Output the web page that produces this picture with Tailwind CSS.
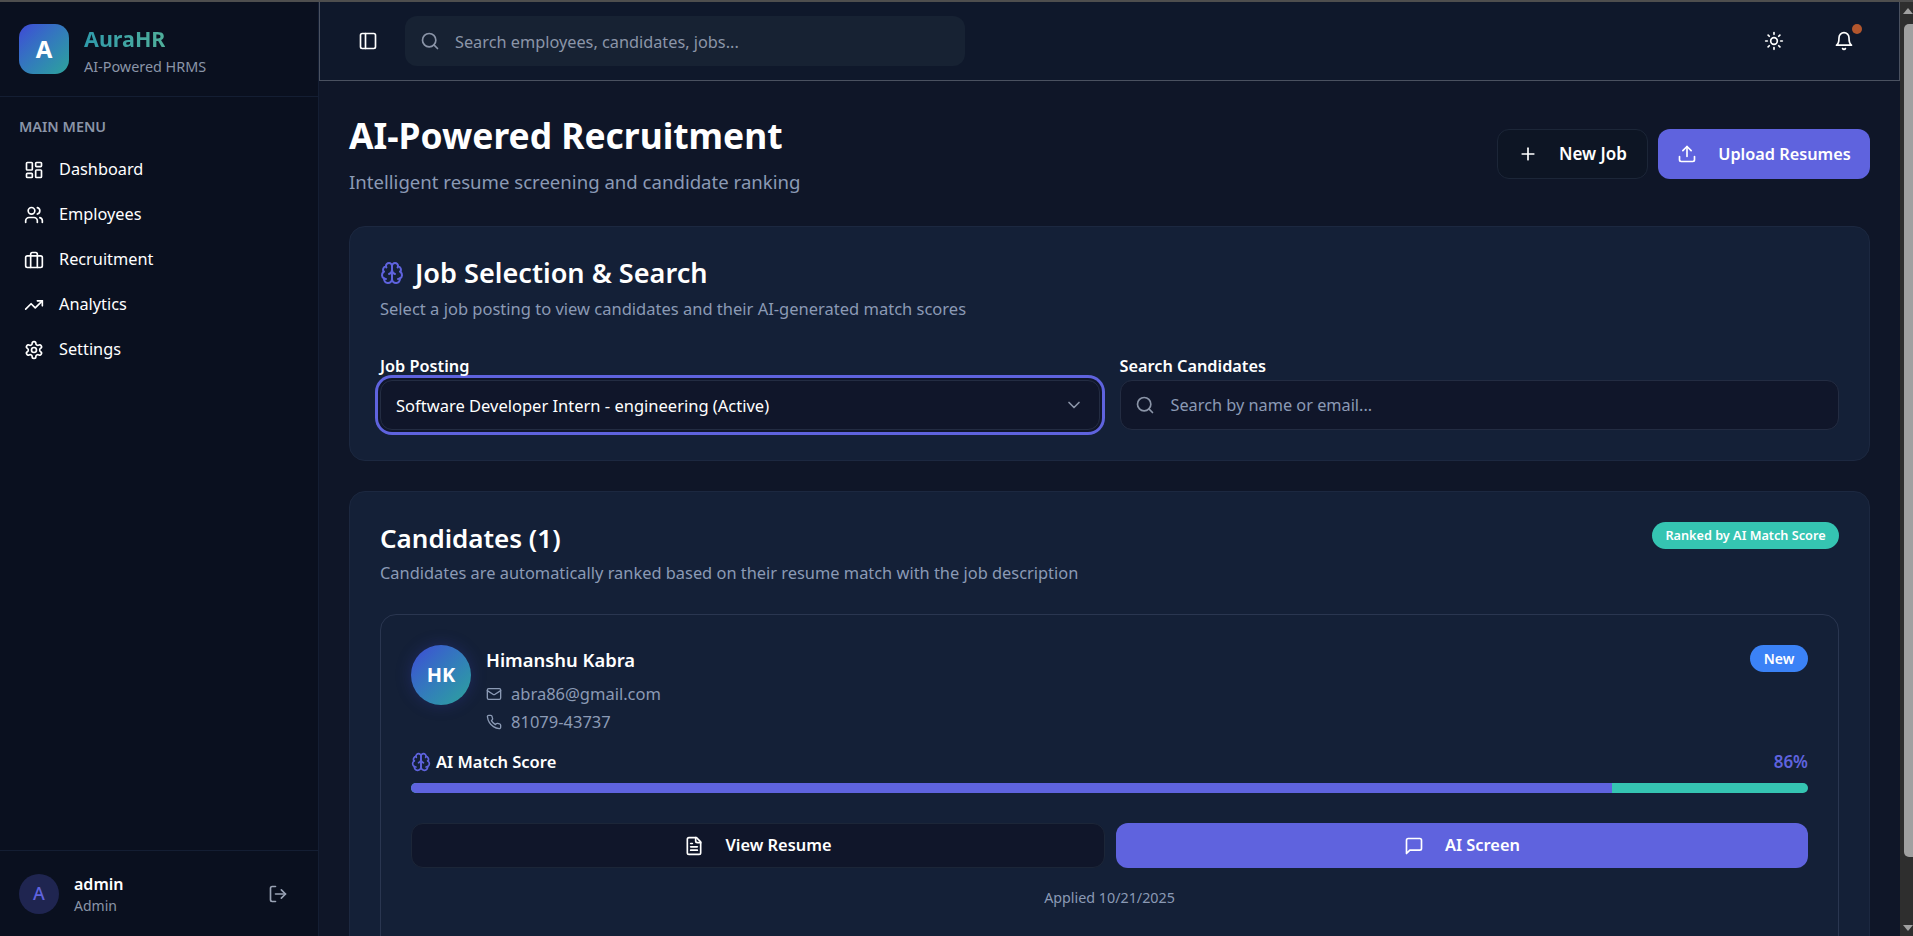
<!DOCTYPE html>
<html lang="en">
<head>
  <meta charset="UTF-8" />
  <meta name="viewport" content="width=device-width, initial-scale=1.0"/>
  <title>AuraHR - Recruitment</title>
  <script src="https://cdn.jsdelivr.net/npm/@tailwindcss/browser@4"></script>
</head>
<body class="bg-[#0f1628] font-['Noto_Sans',sans-serif] text-white overflow-hidden">
  <div class="h-[936px] flex flex-col overflow-hidden">
    <div class="h-[2px] bg-[#4e4e4e] shrink-0"></div>
    <div class="flex flex-1 min-h-0">

      <!-- Sidebar -->
      <aside class="w-[319px] shrink-0 bg-[#0a101f] border-r border-[#141e33] flex flex-col">
        <div class="h-[95px] border-b border-[#141e33] pl-[19px] flex items-center gap-[15px] shrink-0">
          <div class="w-[50px] h-[50px] rounded-[14px] bg-gradient-to-br from-[#3f46d6] to-[#2ea39a] flex items-center justify-center text-[24px] font-bold">A</div>
          <div class="pt-[4px]">
            <div class="text-[21.5px] leading-[26px] font-bold bg-gradient-to-r from-[#2f9bab] to-[#4fae9a] bg-clip-text text-transparent w-fit">AuraHR</div>
            <div class="text-[14.4px] leading-[20px] text-[#8b95a8] mt-[5px]">AI-Powered HRMS</div>
          </div>
        </div>
        <div class="flex-1 pt-[20px]">
          <div class="pl-[19px] text-[14.4px] leading-[20px] font-semibold text-[#8b95a8]">MAIN MENU</div>
          <nav class="mt-[10px] flex flex-col">
            <a class="h-[45px] pl-[24px] flex items-center gap-[15px] text-[16.3px]">
              <svg class="w-[20px] h-[20px]" viewBox="0 0 24 24" fill="none" stroke="currentColor" stroke-width="2" stroke-linecap="round" stroke-linejoin="round"><rect x="3" y="3" width="7" height="9" rx="1"/><rect x="14" y="3" width="7" height="5" rx="1"/><rect x="14" y="12" width="7" height="9" rx="1"/><rect x="3" y="16" width="7" height="5" rx="1"/></svg>
              Dashboard
            </a>
            <a class="h-[45px] pl-[24px] flex items-center gap-[15px] text-[16.3px]">
              <svg class="w-[20px] h-[20px]" viewBox="0 0 24 24" fill="none" stroke="currentColor" stroke-width="2" stroke-linecap="round" stroke-linejoin="round"><path d="M16 21v-2a4 4 0 0 0-4-4H6a4 4 0 0 0-4 4v2"/><circle cx="9" cy="7" r="4"/><path d="M22 21v-2a4 4 0 0 0-3-3.87"/><path d="M16 3.13a4 4 0 0 1 0 7.75"/></svg>
              Employees
            </a>
            <a class="h-[45px] pl-[24px] flex items-center gap-[15px] text-[16.3px]">
              <svg class="w-[20px] h-[20px]" viewBox="0 0 24 24" fill="none" stroke="currentColor" stroke-width="2" stroke-linecap="round" stroke-linejoin="round"><rect x="2" y="7" width="20" height="14" rx="2"/><path d="M16 21V5a2 2 0 0 0-2-2h-4a2 2 0 0 0-2 2v16"/></svg>
              Recruitment
            </a>
            <a class="h-[45px] pl-[24px] flex items-center gap-[15px] text-[16.3px]">
              <svg class="w-[20px] h-[20px]" viewBox="0 0 24 24" fill="none" stroke="currentColor" stroke-width="2" stroke-linecap="round" stroke-linejoin="round"><polyline points="22 7 13.5 15.5 8.5 10.5 2 17"/><polyline points="16 7 22 7 22 13"/></svg>
              Analytics
            </a>
            <a class="h-[45px] pl-[24px] flex items-center gap-[15px] text-[16.3px]">
              <svg class="w-[20px] h-[20px]" viewBox="0 0 24 24" fill="none" stroke="currentColor" stroke-width="2" stroke-linecap="round" stroke-linejoin="round"><path d="M12.22 2h-.44a2 2 0 0 0-2 2v.18a2 2 0 0 1-1 1.73l-.43.25a2 2 0 0 1-2 0l-.15-.08a2 2 0 0 0-2.73.73l-.22.38a2 2 0 0 0 .73 2.73l.15.1a2 2 0 0 1 1 1.72v.51a2 2 0 0 1-1 1.74l-.15.09a2 2 0 0 0-.73 2.73l.22.38a2 2 0 0 0 2.73.73l.15-.08a2 2 0 0 1 2 0l.43.25a2 2 0 0 1 1 1.73V20a2 2 0 0 0 2 2h.44a2 2 0 0 0 2-2v-.18a2 2 0 0 1 1-1.73l.43-.25a2 2 0 0 1 2 0l.15.08a2 2 0 0 0 2.73-.73l.22-.39a2 2 0 0 0-.73-2.73l-.15-.08a2 2 0 0 1-1-1.74v-.5a2 2 0 0 1 1-1.74l.15-.09a2 2 0 0 0 .73-2.73l-.22-.38a2 2 0 0 0-2.73-.73l-.15.08a2 2 0 0 1-2 0l-.43-.25a2 2 0 0 1-1-1.73V4a2 2 0 0 0-2-2z"/><circle cx="12" cy="12" r="3"/></svg>
              Settings
            </a>
          </nav>
        </div>
        <div class="h-[86px] border-t border-[#141e33] pl-[19px] pr-[30px] flex items-center shrink-0">
          <div class="w-[40px] h-[40px] rounded-full bg-[#1f2550] text-[#5f63de] flex items-center justify-center text-[18px] font-medium">A</div>
          <div class="ml-[15px] flex-1 pt-[2px]">
            <div class="text-[16px] leading-[22px] font-semibold">admin</div>
            <div class="text-[14px] leading-[22px] text-[#8b95a8]">Admin</div>
          </div>
          <svg class="w-[20px] h-[20px] text-[#9aa3b5]" viewBox="0 0 24 24" fill="none" stroke="currentColor" stroke-width="2" stroke-linecap="round" stroke-linejoin="round"><path d="M9 21H5a2 2 0 0 1-2-2V5a2 2 0 0 1 2-2h4"/><polyline points="16 17 21 12 16 7"/><line x1="21" y1="12" x2="9" y2="12"/></svg>
        </div>
      </aside>

      <!-- Main -->
      <div class="flex-1 min-w-0 flex flex-col">
        <header class="h-[79px] shrink-0 bg-[#0f182b] border-l border-b border-r border-[#4a5160] flex items-center pl-[38px] pr-[45px]">
          <svg class="w-[20px] h-[20px]" viewBox="0 0 24 24" fill="none" stroke="currentColor" stroke-width="2" stroke-linecap="round" stroke-linejoin="round"><rect x="3" y="3" width="18" height="18" rx="2"/><path d="M9 3v18"/></svg>
          <div class="ml-[27px] w-[560px] h-[50px] rounded-[12px] bg-[#172233] flex items-center pl-[15px] gap-[15px]">
            <svg class="w-[20px] h-[20px] text-[#8b95a8]" viewBox="0 0 24 24" fill="none" stroke="currentColor" stroke-width="2" stroke-linecap="round" stroke-linejoin="round"><circle cx="11" cy="11" r="8"/><path d="m21 21-4.3-4.3"/></svg>
            <span class="pt-[2px] text-[16.3px] text-[#8b95a8]">Search employees, candidates, jobs...</span>
          </div>
          <div class="ml-auto flex items-center gap-[50px]">
            <svg class="w-[20px] h-[20px]" viewBox="0 0 24 24" fill="none" stroke="currentColor" stroke-width="2" stroke-linecap="round" stroke-linejoin="round"><circle cx="12" cy="12" r="4"/><path d="M12 2v2"/><path d="M12 20v2"/><path d="m4.93 4.93 1.41 1.41"/><path d="m17.66 17.66 1.41 1.41"/><path d="M2 12h2"/><path d="M20 12h2"/><path d="m6.34 17.66-1.41 1.41"/><path d="m19.07 4.93-1.41 1.41"/></svg>
            <div class="relative">
              <svg class="w-[20px] h-[20px]" viewBox="0 0 24 24" fill="none" stroke="currentColor" stroke-width="2" stroke-linecap="round" stroke-linejoin="round"><path d="M6 8a6 6 0 0 1 12 0c0 7 3 9 3 9H3s3-2 3-9"/><path d="M10.3 21a1.94 1.94 0 0 0 3.4 0"/></svg>
              <span class="absolute -top-[7px] -right-[8px] w-[10px] h-[10px] rounded-full bg-[#b3562d]"></span>
            </div>
          </div>
        </header>

        <main class="flex-1 min-h-0 overflow-hidden pl-[30px] pr-[30px] pt-[30px]">
          <div class="flex items-start justify-between">
            <div>
              <h1 class="text-[35.4px] leading-[48px] font-bold">AI-Powered Recruitment</h1>
              <p class="text-[18.6px] leading-[26px] mt-[10px] text-[#8b9ab5]">Intelligent resume screening and candidate ranking</p>
            </div>
            <div class="flex gap-[10px] mt-[18px]">
              <button class="h-[50px] w-[151px] rounded-[12px] bg-[#0d1524] border border-[#1c2638] flex items-center justify-center gap-[21px] text-[17px] font-semibold">
                <svg class="w-[20px] h-[20px]" viewBox="0 0 24 24" fill="none" stroke="currentColor" stroke-width="2" stroke-linecap="round" stroke-linejoin="round"><path d="M5 12h14"/><path d="M12 5v14"/></svg>
                New Job
              </button>
              <button class="h-[50px] w-[212px] rounded-[12px] bg-[#5f63de] flex items-center justify-center gap-[21px] text-[16.3px] font-semibold">
                <svg class="w-[20px] h-[20px]" viewBox="0 0 24 24" fill="none" stroke="currentColor" stroke-width="2" stroke-linecap="round" stroke-linejoin="round"><path d="M21 15v4a2 2 0 0 1-2 2H5a2 2 0 0 1-2-2v-4"/><polyline points="17 8 12 3 7 8"/><line x1="12" y1="3" x2="12" y2="15"/></svg>
                Upload Resumes
              </button>
            </div>
          </div>

          <!-- Job selection -->
          <section class="mt-[31px] h-[235px] rounded-[16px] bg-[#142037] border border-[#1c2840] px-[30px] pt-[27px]">
            <div class="flex items-center gap-[11px]">
              <svg class="w-[24px] h-[24px] text-[#5f63de]" viewBox="0 0 24 24" fill="none" stroke="currentColor" stroke-width="2" stroke-linecap="round" stroke-linejoin="round"><path d="M12 5a3 3 0 1 0-5.997.125 4 4 0 0 0-2.526 5.77 4 4 0 0 0 .556 6.588A4 4 0 1 0 12 18Z"/><path d="M12 5a3 3 0 1 1 5.997.125 4 4 0 0 1 2.526 5.77 4 4 0 0 1-.556 6.588A4 4 0 1 1 12 18Z"/><path d="M15 13a4.5 4.5 0 0 1-3-4 4.5 4.5 0 0 1-3 4"/><path d="M17.599 6.5a3 3 0 0 0 .399-1.375"/><path d="M6.003 5.125A3 3 0 0 0 6.401 6.5"/><path d="M3.477 10.896a4 4 0 0 1 .585-.396"/><path d="M19.938 10.5a4 4 0 0 1 .585.396"/><path d="M6 18a4 4 0 0 1-1.967-.516"/><path d="M19.967 17.484A4 4 0 0 1 18 18"/></svg>
              <h2 class="text-[27.1px] leading-[38px] font-semibold">Job Selection &amp; Search</h2>
            </div>
            <p class="text-[16.5px] leading-[22px] mt-[6px] text-[#8b9ab5]">Select a job posting to view candidates and their AI-generated match scores</p>
            <div class="grid grid-cols-2 gap-[20px] mt-[35px]">
              <div>
                <div class="text-[16.3px] leading-[22px] font-semibold">Job Posting</div>
                <div class="mt-[3px] h-[50px] rounded-[12px] bg-[#10162a] border border-[#232c42] ring-[3px] ring-[#5f63de] ring-offset-2 ring-offset-[#10162a] pl-[15px] pr-[15px] flex items-center justify-between">
                  <span class="pt-[2px] text-[16.5px]">Software Developer Intern - engineering (Active)</span>
                  <svg class="w-[20px] h-[20px] text-[#8b95a8]" viewBox="0 0 24 24" fill="none" stroke="currentColor" stroke-width="2" stroke-linecap="round" stroke-linejoin="round"><path d="m6 9 6 6 6-6"/></svg>
                </div>
              </div>
              <div>
                <div class="text-[16.3px] leading-[22px] font-semibold">Search Candidates</div>
                <div class="mt-[3px] h-[50px] rounded-[12px] bg-[#10162a] border border-[#232c42] pl-[14px] flex items-center gap-[16px]">
                  <svg class="w-[20px] h-[20px] text-[#8b95a8]" viewBox="0 0 24 24" fill="none" stroke="currentColor" stroke-width="2" stroke-linecap="round" stroke-linejoin="round"><circle cx="11" cy="11" r="8"/><path d="m21 21-4.3-4.3"/></svg>
                  <span class="text-[16.3px] text-[#8b9ab5]">Search by name or email...</span>
                </div>
              </div>
            </div>
          </section>

          <!-- Candidates -->
          <section class="mt-[30px] h-[520px] rounded-[16px] bg-[#142037] border border-[#1c2840] px-[30px] pt-[27px]">
            <div class="flex items-start justify-between">
              <div>
                <h2 class="text-[26px] leading-[38px] font-semibold">Candidates (1)</h2>
                <p class="text-[16.4px] leading-[22px] mt-[5px] text-[#8b9ab5]">Candidates are automatically ranked based on their resume match with the job description</p>
              </div>
              <span class="mt-[3px] h-[27px] w-[187px] rounded-full bg-[#35c4b2] text-[12.7px] font-semibold flex items-center justify-center">Ranked by AI Match Score</span>
            </div>

            <div class="mt-[30px] h-[400px] rounded-[16px] border border-[#2a3650] px-[30px] pt-[30px]">
              <div class="flex items-start justify-between">
                <div class="flex gap-[15px]">
                  <div class="w-[60px] h-[60px] rounded-full bg-gradient-to-br from-[#3f46d6] to-[#2ea39a] shadow-[0_0_16px_rgba(63,70,214,0.25)] flex items-center justify-center text-[20px] font-bold">HK</div>
                  <div class="pt-[2px]">
                    <div class="text-[18.4px] leading-[26px] font-semibold">Himanshu Kabra</div>
                    <div class="mt-[7px] flex items-center gap-[9px] text-[16.5px] leading-[28px] text-[#8b9ab5]">
                      <svg class="w-[16px] h-[16px]" viewBox="0 0 24 24" fill="none" stroke="currentColor" stroke-width="2" stroke-linecap="round" stroke-linejoin="round"><rect x="2" y="4" width="20" height="16" rx="2"/><path d="m22 7-8.97 5.7a1.94 1.94 0 0 1-2.06 0L2 7"/></svg>
                      abra86@gmail.com
                    </div>
                    <div class="flex items-center gap-[9px] text-[16.5px] leading-[28px] text-[#8b9ab5]">
                      <svg class="w-[16px] h-[16px]" viewBox="0 0 24 24" fill="none" stroke="currentColor" stroke-width="2" stroke-linecap="round" stroke-linejoin="round"><path d="M22 16.92v3a2 2 0 0 1-2.18 2 19.79 19.79 0 0 1-8.63-3.07 19.5 19.5 0 0 1-6-6 19.79 19.79 0 0 1-3.07-8.67A2 2 0 0 1 4.11 2h3a2 2 0 0 1 2 1.72 12.84 12.84 0 0 0 .7 2.81 2 2 0 0 1-.45 2.11L8.09 9.91a16 16 0 0 0 6 6l1.27-1.27a2 2 0 0 1 2.11-.45 12.84 12.84 0 0 0 2.81.7A2 2 0 0 1 22 16.92z"/></svg>
                      81079-43737
                    </div>
                  </div>
                </div>
                <span class="h-[27px] w-[58px] rounded-full bg-[#3b82f6] text-[14px] font-semibold flex items-center justify-center">New</span>
              </div>

              <div class="mt-[14px] flex items-center justify-between">
                <div class="flex items-center gap-[5px] text-[16.5px] leading-[24px] font-semibold">
                  <svg class="w-[20px] h-[20px] text-[#5f63de]" viewBox="0 0 24 24" fill="none" stroke="currentColor" stroke-width="2" stroke-linecap="round" stroke-linejoin="round"><path d="M12 5a3 3 0 1 0-5.997.125 4 4 0 0 0-2.526 5.77 4 4 0 0 0 .556 6.588A4 4 0 1 0 12 18Z"/><path d="M12 5a3 3 0 1 1 5.997.125 4 4 0 0 1 2.526 5.77 4 4 0 0 1-.556 6.588A4 4 0 1 1 12 18Z"/><path d="M15 13a4.5 4.5 0 0 1-3-4 4.5 4.5 0 0 1-3 4"/><path d="M17.599 6.5a3 3 0 0 0 .399-1.375"/><path d="M6.003 5.125A3 3 0 0 0 6.401 6.5"/><path d="M3.477 10.896a4 4 0 0 1 .585-.396"/><path d="M19.938 10.5a4 4 0 0 1 .585.396"/><path d="M6 18a4 4 0 0 1-1.967-.516"/><path d="M19.967 17.484A4 4 0 0 1 18 18"/></svg>
                  AI Match Score
                </div>
                <span class="text-[17px] leading-[24px] font-semibold text-[#5f63de]">86%</span>
              </div>
              <div class="mt-[9px] h-[10px] rounded-full bg-[#35c4b2] overflow-hidden">
                <div class="h-full bg-[#5f63de]" style="width: 86%"></div>
              </div>

              <div class="grid grid-cols-[694px_1fr] gap-[11px] mt-[30px]">
                <button class="h-[45px] rounded-[12px] bg-[#10162a] border border-[#1c2638] flex items-center justify-center gap-[21px] text-[16.4px] font-semibold">
                  <svg class="w-[20px] h-[20px]" viewBox="0 0 24 24" fill="none" stroke="currentColor" stroke-width="2" stroke-linecap="round" stroke-linejoin="round"><path d="M15 2H6a2 2 0 0 0-2 2v16a2 2 0 0 0 2 2h12a2 2 0 0 0 2-2V7Z"/><path d="M14 2v4a2 2 0 0 0 2 2h4"/><path d="M10 9H8"/><path d="M16 13H8"/><path d="M16 17H8"/></svg>
                  View Resume
                </button>
                <button class="h-[45px] rounded-[12px] bg-[#5f63de] flex items-center justify-center gap-[21px] text-[16.4px] font-semibold">
                  <svg class="w-[20px] h-[20px]" viewBox="0 0 24 24" fill="none" stroke="currentColor" stroke-width="2" stroke-linecap="round" stroke-linejoin="round"><path d="M21 15a2 2 0 0 1-2 2H7l-4 4V5a2 2 0 0 1 2-2h14a2 2 0 0 1 2 2z"/></svg>
                  AI Screen
                </button>
              </div>
              <p class="mt-[20px] text-center text-[14.3px] leading-[20px] text-[#8b9ab5]">Applied 10/21/2025</p>
            </div>
          </section>
        </main>
      </div>

      <!-- Scrollbar -->
      <div class="w-[13px] shrink-0 bg-[#2e2e2e] relative">
        <div class="absolute left-[3px] top-[6px] w-0 h-0 border-x-[5px] border-x-transparent border-b-[6px] border-b-[#a0a0a0]"></div>
        <div class="absolute right-0 top-[22px] w-[9px] h-[833px] rounded-l-[5px] bg-[#a0a0a0]"></div>
        <div class="absolute left-[3px] bottom-[5px] w-0 h-0 border-x-[5px] border-x-transparent border-t-[6px] border-t-[#a0a0a0]"></div>
      </div>
    </div>
  </div>
</body>
</html>
